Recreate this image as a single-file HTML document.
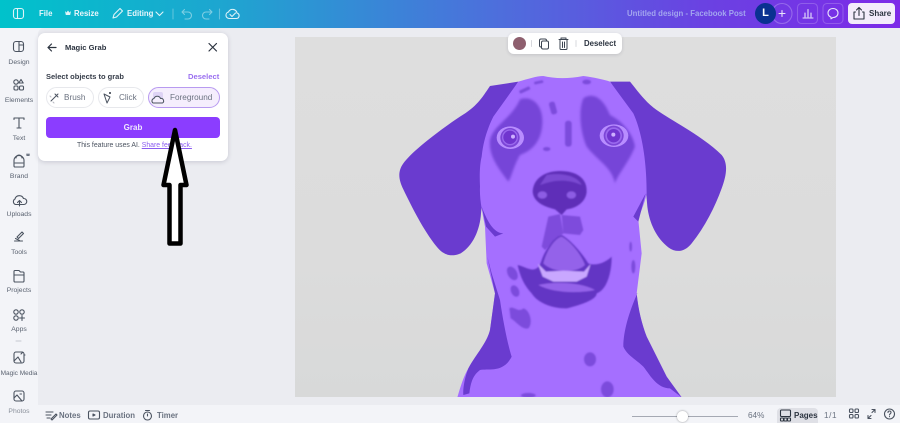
<!DOCTYPE html>
<html><head><meta charset="utf-8">
<style>
*{box-sizing:border-box}
html,body{margin:0;padding:0}
body{width:900px;height:423px;overflow:hidden;position:relative;background:#f3f4f8;font-family:"Liberation Sans",sans-serif;color:#2c3440}
.a{position:absolute;white-space:nowrap}
.top{left:0;top:0;width:900px;height:28px;background:linear-gradient(90deg,#00c2cb 0%,#1ea5d0 25%,#4d6fdc 55%,#6a42e2 78%,#7d2ae8 100%)}
.t{color:#e9f6fb;font-size:7.800px;font-weight:bold;top:9px}
.work{left:38px;top:28px;width:862px;height:377px;background:#ebecf1;border-top-left-radius:6px}
.side{width:38px;left:0;text-align:center;font-size:6.800px;color:#5a6270}
.ic{fill:none;stroke:#4b5360;stroke-width:1.100;stroke-linecap:round;stroke-linejoin:round}
.panel{left:38px;top:33px;width:190px;height:128px;background:#fff;border-radius:7px;box-shadow:0 1px 5px rgba(40,40,70,.18)}
.pill{top:87px;height:21px;border-radius:11px;border:1px solid #e7e8ec;background:#fff;font-size:8.200px;color:#6b7280;line-height:19px}
.bt{top:411px;font-size:8.200px;color:#6a7280;font-weight:bold}
</style></head>
<body>
<div class="a top"></div>
<svg class="a" style="left:0;top:0" width="900" height="28" fill="none" stroke="#dff4f8" stroke-width="1.100" stroke-linecap="round" stroke-linejoin="round">
<rect x="13.500" y="8.500" width="10" height="10" rx="2.500"/><path d="M17.500 8.500v10"/>
<path d="M65 11l1.500 1.500L68 10.500l1.500 2L71 11l-.8 4h-4.400z" fill="#dff4f8" stroke="none"/>
<path d="M113 18l1-3.500 6-6 2.500 2.500-6 6z"/>
<path d="M156 12l3.500 3.500L163 12"/>
<path d="M173 9v10M219.500 9v10" stroke="#fff" stroke-opacity=".3"/>
<path d="M182 12h6a3.500 3.500 0 0 1 0 7h-3M182 12l2.500-2.500M182 12l2.500 2.500" stroke-opacity=".5"/>
<path d="M212 12h-6a3.500 3.500 0 0 0 0 7h3M212 12l-2.500-2.500M212 12l-2.500 2.500" stroke-opacity=".5"/>
<path d="M229 18.500a3.300 3.300 0 0 1-.5-6.500 4.500 4.500 0 0 1 8.500 1 2.800 2.800 0 0 1-.5 5.500z"/><path d="M230 14.500l2 2 3.500-3.500"/>
<circle cx="782" cy="13.500" r="10" stroke="#fff" stroke-opacity=".25"/>
<path d="M782 10.500v6M779 13.500h6" stroke="#e8e4fb"/>
<rect x="797.500" y="3.500" width="20" height="20" rx="4" stroke="#fff" stroke-opacity=".2"/>
<path d="M803 18h10M805 17v-4M808 17V9.500M811 17v-4" stroke="#e8e4fb"/>
<rect x="823" y="3.500" width="20" height="20" rx="4" stroke="#fff" stroke-opacity=".2"/>
<path d="M833 8.500c3 0 5 2 5 4.500s-2 4.500-5 4.500l-2 1.300v-1.700c-2-.7-3-2.300-3-4.100 0-2.500 2-4.500 5-4.500z" stroke="#e8e4fb"/>
</svg>
<div class="a t" style="left:39px">File</div>
<div class="a t" style="left:74px">Resize</div>
<div class="a t" style="left:127px">Editing</div>
<div class="a" style="left:627px;top:9px;font-size:7.800px;color:#a3a6ef;font-weight:bold">Untitled design - Facebook Post</div>
<div class="a" style="left:755px;top:3px;width:21px;height:21px;border-radius:50%;background:#0a3191;color:#fff;font-size:11px;font-weight:bold;text-align:center;line-height:21px">L</div>
<div class="a" style="left:848px;top:3px;width:47px;height:21px;border-radius:4px;background:#f3ecfb"></div>
<svg class="a" style="left:852px;top:6px" width="14" height="15" fill="none" stroke="#2c3440" stroke-width="1.100" stroke-linecap="round" stroke-linejoin="round"><path d="M3.500 6H2v7h10V6h-1.500M7 9.500V1.500M4.500 4L7 1.500 9.500 4"/></svg>
<div class="a" style="left:869px;top:9px;font-size:8px;font-weight:bold;color:#2c3440">Share</div>

<div class="a work"></div>

<!-- canvas + dog -->
<div class="a" style="left:295px;top:37px;width:541px;height:360px;background:linear-gradient(180deg,#dedede,#dcdcdc 60%,#d8d9d9)"></div>
<svg class="a" style="left:380px;top:60px" width="360" height="340" viewBox="0 0 1080 1020">
<defs><filter id="b"><feGaussianBlur stdDeviation="2.500"/></filter><filter id="c"><feGaussianBlur stdDeviation="4"/></filter></defs>
<g fill="#6a3bcf">
<path d="M415 65 L330 78 C305 115 290 140 240 170 C180 210 100 270 70 310 C52 335 56 360 70 388 C95 440 130 510 170 560 C190 586 215 592 242 580 C278 558 300 510 303 460 L320 300 L350 170Z"/>
<path d="M690 65 L750 65 C775 95 795 125 830 150 C880 185 970 230 1025 285 C1045 310 1040 345 1025 385 C1005 440 975 500 935 550 C915 575 890 580 865 562 C830 535 808 490 802 440 L790 300 L760 170Z"/>
</g>
<path fill="#a56fff" d="M415 65 C440 58 470 48 490 48 C520 55 560 58 610 48 C640 52 670 58 690 65 L760 160 C785 215 800 300 800 400 C795 430 775 470 775 480 L785 580 L770 700 C775 750 785 790 800 830 L860 950 L905 1012 L232 1012 C240 985 250 950 265 925 C290 880 320 850 330 810 L345 700 L320 610 L315 500 C308 460 298 420 300 380 C298 340 300 310 305 290 C310 240 325 200 340 170Z"/>
<g fill="#6a3bcf">
<path d="M322 590 L345 700 L330 810 C320 850 290 880 265 925 C255 950 248 985 250 1005 L268 1000 C272 965 280 945 300 930 C325 925 370 940 395 890 C385 860 370 790 360 720 L335 640Z"/>
<path d="M772 700 C750 750 730 810 730 860 C740 885 770 900 790 920 C810 945 830 985 870 985 L905 1012 L860 950 L800 830 C785 790 775 750 770 700Z"/>
<path d="M305 440 C320 480 340 520 370 520 L345 530 L318 500Z"/>
<path d="M797 400 L760 470 L775 485Z"/>
</g>
<g fill="#7645d8" filter="url(#c)">
<path d="M420 118 C460 105 490 140 487 190 C485 240 460 270 420 285 C400 320 395 350 385 365 C360 330 325 290 330 240 C340 195 395 175 420 118Z"/>
<path d="M610 115 C640 95 670 115 690 165 C730 185 760 225 765 260 C745 310 715 340 705 370 C695 320 650 300 620 260 C600 215 595 150 610 115Z"/>
</g>
<g fill="#7c4bdc" filter="url(#b)">
<rect x="510" y="125" width="18" height="38" rx="7" transform="rotate(-15 519 144)"/>
<rect x="555" y="182" width="20" height="78" rx="9"/>
<rect x="417" y="85" width="34" height="10" rx="4" transform="rotate(-25 434 90)"/>
<rect x="462" y="63" width="28" height="8" rx="4" transform="rotate(-12 476 67)"/>
<ellipse cx="620" cy="66" rx="13" ry="7"/>
<ellipse cx="500" cy="267" rx="11" ry="6"/>
<ellipse cx="405" cy="693" rx="12" ry="18" transform="rotate(-25 405 693)"/>
<path d="M388 745 C400 735 415 760 430 745 C450 750 460 790 445 805 C425 810 410 785 392 775Z"/>
<ellipse cx="630" cy="898" rx="18" ry="21"/>
<ellipse cx="682" cy="988" rx="19" ry="24"/>
<ellipse cx="445" cy="1006" rx="22" ry="7"/>
<ellipse cx="397" cy="640" rx="14" ry="22" transform="rotate(-30 397 640)"/>
<ellipse cx="760" cy="620" rx="6" ry="20"/>
<ellipse cx="752" cy="560" rx="4" ry="15"/>
</g>
<!-- eyes -->
<g>
<ellipse cx="391" cy="233" rx="41" ry="34" fill="#b88dff"/><circle cx="390" cy="233" r="29" fill="#7b45d6"/><circle cx="390" cy="232" r="24" fill="#9a69ee"/><circle cx="390" cy="232" r="20" fill="#7035cf"/><circle cx="399" cy="230" r="6" fill="#cdb0ff"/>
<ellipse cx="702" cy="227" rx="43" ry="34" fill="#b88dff"/><circle cx="701" cy="227" r="30" fill="#7b45d6"/><circle cx="701" cy="227" r="25" fill="#9a69ee"/><circle cx="701" cy="227" r="20" fill="#7035cf"/><circle cx="700" cy="224" r="6" fill="#cdb0ff"/>
</g>
<!-- nose -->
<g filter="url(#b)">
<path d="M540 333 C590 333 622 355 620 395 C618 425 590 445 560 448 L545 465 L525 448 C490 440 460 425 458 395 C460 355 495 333 540 333Z" fill="#5e2fb8"/>
<path d="M500 345 C540 338 590 345 605 375 C560 355 520 360 480 375Z" fill="#7a48d2"/>
<ellipse cx="487" cy="405" rx="14" ry="11" fill="#8d5ce4"/><ellipse cx="574" cy="405" rx="14" ry="11" fill="#8d5ce4"/>
<path d="M505 470 L540 462 L550 520 L495 570 L485 560Z M545 465 L600 470 L610 510 L600 525 L550 520Z" fill="#7e4bdc"/>
</g>
<!-- mouth -->
<g filter="url(#b)">
<path d="M413 615 C440 620 470 650 485 600 C500 560 525 530 545 525 C565 535 600 570 625 610 C650 620 680 605 695 590 C695 640 680 690 650 700 C650 715 620 730 560 745 C510 745 470 725 455 700 C435 680 420 650 413 615Z" fill="#6434c4"/>
<path d="M490 610 C500 570 525 535 545 530 C565 540 600 575 615 615 C590 640 520 640 490 610Z" fill="#9462ea"/>
<path d="M473 610 L488 650 L520 665 L590 665 L620 650 L632 612 L612 635 L550 632 L498 635Z" fill="#c9a7ff"/>
<path d="M475 675 C520 665 600 665 645 690 C600 700 520 700 475 675Z" fill="#9462ea"/>
</g>
</svg>
<div class="a" style="left:295px;top:397px;width:541px;height:8px;background:#ebecf1"></div>

<!-- floating toolbar -->
<div class="a" style="left:508px;top:33px;width:114px;height:21px;border-radius:6px;background:#fff;box-shadow:0 1px 3px rgba(40,40,70,.15)"></div>
<div class="a" style="left:513px;top:37px;width:13px;height:13px;border-radius:50%;background:#8e5f6e"></div>
<svg class="a" style="left:530px;top:35px" width="60" height="17" fill="none" stroke="#3c4450" stroke-width="1" stroke-linejoin="round" stroke-linecap="round">
<path d="M1.500 5.500v6" stroke="#d7d8dd"/><rect x="9.500" y="4" width="7" height="8" rx="1.500"/><rect x="11.500" y="6" width="7" height="8" rx="1.500" fill="#fff"/>
<path d="M29 4.500h9M31 4.500V3h5v1.500M30 5v8.500a1 1 0 0 0 1 1h5a1 1 0 0 0 1-1V5M32.500 7v5.500M34.500 7v5.500"/>
<path d="M46 5.500v6" stroke="#d7d8dd"/>
</svg>
<div class="a" style="left:584px;top:39px;font-size:7.800px;font-weight:bold;color:#2c3440">Deselect</div>

<!-- sidebar -->
<div class="a side" style="top:59px">Design</div>
<div class="a side" style="top:97px">Elements</div>
<div class="a side" style="top:135px">Text</div>
<div class="a side" style="top:173px">Brand</div>
<div class="a side" style="top:211px">Uploads</div>
<div class="a side" style="top:249px">Tools</div>
<div class="a side" style="top:287px">Projects</div>
<div class="a side" style="top:326px">Apps</div>
<div class="a side" style="top:370px;font-size:6.500px">Magic Media</div>
<div class="a side" style="top:408px;color:#8a909a">Photos</div>
<svg class="a ic" style="left:0;top:30px" width="38" height="393">
<rect x="13.500" y="11.500" width="10" height="10" rx="2.500"/><path d="M19 11.500v10M19 15h4.500"/>
<circle cx="16" cy="52" r="2.200"/><path d="M21 49.500l2.200 3.500h-4.400z"/><rect x="14" y="56" width="4" height="4" rx="1.200"/><rect x="19.500" y="56" width="4" height="4" rx="1.200"/>
<path d="M14 89.500v-1.500h10v1.500M19 88v10M17 98h4"/>
<path d="M14 130.500a5 5 0 0 1 10 0v5.500a1 1 0 0 1-1 1h-8a1 1 0 0 1-1-1z"/><path d="M16 128a3 3 0 0 1 6 0M15 133h8"/>
<path d="M26 123l1 1.500 1-1.500 1 1.500 1-1.500-.5 3h-3z" fill="#6a7280" stroke="none"/>
<path d="M15.500 174.500a3 3 0 0 1-.5-5.500 4.500 4.500 0 0 1 8.500-.500 3 3 0 0 1 .5 6zM19.500 176v-5M17.500 172.500l2-2 2 2"/>
<path d="M14.500 211h8M15.500 208.500l4 2M17 207l5-5 1.500 1.500-5 5z"/>
<path d="M14 248v-6.500a1 1 0 0 1 1-1h4l1.500 1.500H23a1 1 0 0 1 1 1V251a1 1 0 0 1-1 1h-8a1 1 0 0 1-1-1z"/><path d="M14 245h10"/>
<circle cx="16" cy="282" r="2.200"/><circle cx="22" cy="282" r="2.200"/><circle cx="16" cy="288" r="2.200"/><path d="M22 285.500v5M19.500 288h5"/>
<path d="M16 311h5" stroke="#c6c8cf"/>
<rect x="14" y="322" width="10" height="11" rx="2"/><path d="M14 331l4-4 3 5M21 324l1.500-1.500M24 325h1"/>
<rect x="14" y="361" width="10" height="10" rx="2"/><path d="M14 368l3-3 5 6M20 364h1.500"/>
</svg>

<!-- magic grab panel -->
<div class="a panel"></div>
<svg class="a" style="left:38px;top:33px" width="190" height="60" fill="none" stroke="#2c3440" stroke-width="1.200" stroke-linecap="round" stroke-linejoin="round"><path d="M10 14.500h8M10 14.500l3.500-3.500M10 14.500l3.500 3.500"/><path d="M171 10.500l7.500 7.500M178.500 10.500l-7.500 7.500"/></svg>
<div class="a" style="left:65px;top:43px;font-size:7.600px;font-weight:bold;color:#2c3440">Magic Grab</div>
<div class="a" style="left:46px;top:72px;font-size:7.500px;font-weight:bold;color:#363d49">Select objects to grab</div>
<div class="a" style="left:188px;top:72px;font-size:7.600px;font-weight:bold;color:#9a6ff0">Deselect</div>
<div class="a pill" style="left:46px;width:48px;padding-left:17px">Brush</div>
<div class="a pill" style="left:98px;width:46px;padding-left:20px">Click</div>
<div class="a pill" style="left:148px;width:72px;padding-left:21px;background:#f5eefd;border-color:#b89af0">Foreground</div>
<svg class="a" style="left:46px;top:87px" width="130" height="21" fill="none" stroke="#4b5360" stroke-width="1" stroke-linecap="round" stroke-linejoin="round">
<path d="M5 14l7-7M9 7l3 3"/><path d="M4 9l1 1M7 15l1 1" stroke="#b8bac2"/>
<path d="M58 7l6 3-3 6z"/><circle cx="64" cy="6" r="1" fill="#2c3440" stroke="none"/>
<rect x="107" y="5" width="10" height="10" rx="2" fill="#ded3f5" stroke="none"/><path d="M107 16a2.500 2.500 0 0 1 1-4.500 3.500 3.500 0 0 1 6.500 0 2.500 2.500 0 0 1 2 4.500z" fill="#f5eefd"/>
</svg>
<div class="a" style="left:46px;top:117px;width:174px;height:21px;border-radius:4px;background:#8b3dff;color:#f0e8ff;font-size:8px;font-weight:bold;text-align:center;line-height:21px">Grab</div>
<div class="a" style="left:77px;top:142px;font-size:6.900px;color:#4b5360">This feature uses AI. <span style="color:#8b5cf0;text-decoration:underline">Share feedback.</span></div>

<!-- arrow -->
<svg class="a" style="left:155px;top:120px" width="40" height="130"><path d="M20 10 L31.500 65 L25.500 65 L25.500 123.500 L14.500 123.500 L14.500 65 L8.500 65Z" fill="#fff" stroke="#000" stroke-width="4.500" stroke-linejoin="round"/></svg>

<!-- bottom bar -->
<div class="a" style="left:38px;top:405px;width:862px;height:18px;background:#f3f4f8"></div>
<svg class="a ic" style="left:40px;top:405px" width="140" height="18"><path d="M6 7h7M6 10h5M7 13h3M11 14l5-5 1 1-5 5z"/><rect x="48.500" y="6" width="11" height="8" rx="1.500"/><path d="M53 9l2 1-2 1z" fill="#4b5360"/><circle cx="107.500" cy="11" r="4"/><path d="M105.500 5.500h4M107.500 9v2"/></svg>
<div class="a bt" style="left:59px;font-size:7.800px">Notes</div>
<div class="a bt" style="left:103px;font-size:7.800px">Duration</div>
<div class="a bt" style="left:157px;font-size:7.800px">Timer</div>
<div class="a" style="left:632px;top:416px;width:106px;height:1px;background:#a5a9b3"></div>
<div class="a" style="left:677px;top:411px;width:11px;height:11px;border-radius:50%;background:#fff;box-shadow:0 0 2px rgba(0,0,0,.4)"></div>
<div class="a bt" style="left:748px;font-weight:normal">64%</div>
<div class="a" style="left:777px;top:408px;width:41px;height:15px;border-radius:4px 4px 0 0;background:#dfe0e6"></div>
<svg class="a" style="left:779px;top:409px" width="14" height="13" fill="none" stroke="#2c3440" stroke-width="1.100"><rect x="1.500" y="1" width="10" height="6.500" rx="1"/><rect x="1.500" y="9" width="3" height="3" rx=".5"/><rect x="5" y="9" width="3" height="3" rx=".5"/><rect x="8.500" y="9" width="3" height="3" rx=".5"/></svg>
<div class="a bt" style="left:794px;color:#2c3440;font-size:8px">Pages</div>
<div class="a bt" style="left:824px;font-weight:normal;letter-spacing:.6px">1/1</div>
<svg class="a ic" style="left:848px;top:406px" width="50" height="17"><rect x="1.500" y="3" width="3.500" height="3.500" rx="1"/><rect x="7" y="3" width="3.500" height="3.500" rx="1"/><rect x="1.500" y="8.500" width="3.500" height="3.500" rx="1"/><rect x="7" y="8.500" width="3.500" height="3.500" rx="1"/><path d="M24 3.500h3v3M27 3.500l-3 3M20 12.500v-3M20 12.500h3M20 12.500l3-3"/><circle cx="41.500" cy="8" r="5"/><path d="M40 6.500c0-2 3-2 3 0 0 1.200-1.500 1.200-1.500 2.500M41.500 10.500v.2"/></svg>
</body></html>
